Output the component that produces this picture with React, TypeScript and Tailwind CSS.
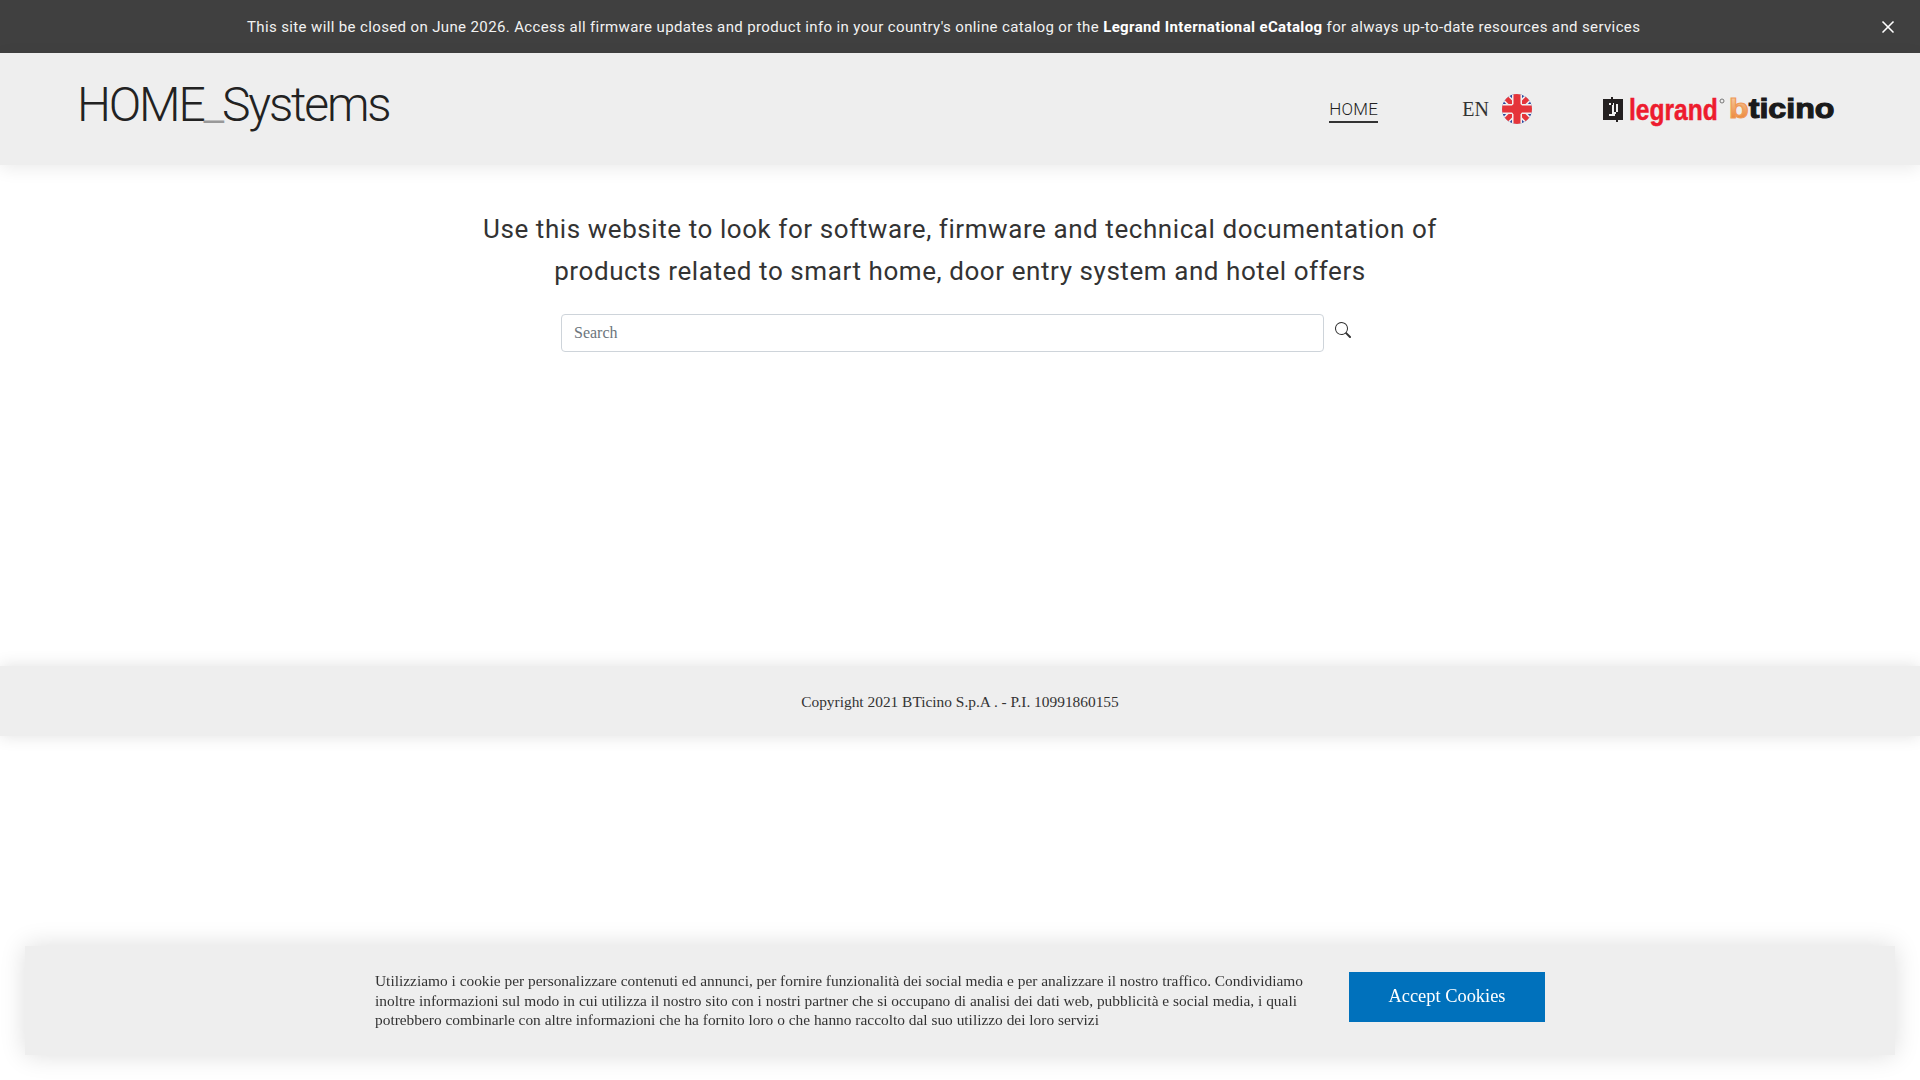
import { X } from "lucide-react";
import { BsSearch } from "react-icons/bs";

const din = "font-['Roboto',sans-serif]";
const serif = "font-['Liberation_Serif',serif]";

function UkFlag() {
  return (
    <svg width="30" height="30" viewBox="0 0 30 30" className="block">
      <defs>
        <clipPath id="flag-circle">
          <circle cx="15" cy="15" r="15" />
        </clipPath>
      </defs>
      <g clipPath="url(#flag-circle)">
        <rect width="30" height="30" fill="#2b4a9f" />
        <path d="M1 1L29 29M29 1L1 29" stroke="#f3eeee" strokeWidth="8" />
        <path d="M1 1L29 29M29 1L1 29" stroke="#e5343a" strokeWidth="5" />
        <path d="M15 0V30M0 15H30" stroke="#f3eeee" strokeWidth="10" />
        <path d="M15 0V30M0 15H30" stroke="#e5343a" strokeWidth="7" />
        <circle cx="15" cy="15" r="6" fill="#e5343a" />
      </g>
    </svg>
  );
}

function BrandLogos() {
  return (
    <svg width="234" height="36" viewBox="0 0 234 36" className="block">
      <defs>
        <linearGradient id="bt-orange" x1="0" y1="0" x2="0" y2="1">
          <stop offset="0" stopColor="#f8d4b0" />
          <stop offset="1" stopColor="#ea7a24" />
        </linearGradient>
      </defs>
      <rect x="1" y="6" width="20" height="21" fill="#231f1f" />
      <path d="M7 11H11V20H15V11" fill="none" stroke="#eeeeee" strokeWidth="2" />
      <path d="M7 22H13" stroke="#eeeeee" strokeWidth="2" />
      <path d="M9 4H11V12H9ZM14 19H16V29H14Z" fill="#231f1f" />
      <text
        transform="translate(27 27) scale(0.82 1)"
        fill="#ed1c2e"
        stroke="#ed1c2e"
        strokeWidth="0.5"
        fontFamily="Liberation Sans"
        fontWeight="700"
        fontSize="30"
      >
        legrand
      </text>
      <circle cx="120" cy="8" r="2" fill="none" stroke="#777" strokeWidth="1" />
      <text
        transform="translate(127 25) scale(1.15 1)"
        fill="#1a1a1a"
        stroke="#1a1a1a"
        strokeWidth="1.1"
        fontFamily="Liberation Sans"
        fontWeight="700"
        fontSize="28"
      >
        <tspan fill="url(#bt-orange)" stroke="#ee9a58">
          b
        </tspan>
        ticino
      </text>
    </svg>
  );
}

export default function App() {
  return (
    <div className="relative h-screen w-full overflow-hidden bg-white">
      {/* Notice */}
      <div
        className={`flex h-[53px] items-center bg-[#404040] pl-[247px] pt-[1px] text-[15px] tracking-[0.37px] text-[#f2f2f2] ${din}`}
      >
        <span className="whitespace-nowrap">
          This site will be closed on June 2026. Access all firmware updates and product info in your country's
          online catalog or the <b className="font-bold text-white">Legrand International eCatalog</b> for always
          up-to-date resources and services
        </span>
        <X size={20} strokeWidth={2} className="ml-auto mr-[22px] text-white" />
      </div>

      {/* Header */}
      <header className="relative z-10 flex h-[112px] items-center bg-[#eeeeee] pl-[77px] shadow-[0_4px_16px_rgba(0,0,0,0.08)]">
        <div className={`-mt-[8px] text-[48px] font-light leading-none tracking-[-2.2px] text-[#222] ${din}`}>
          HOME<span className="text-[#999]">_</span>Systems
        </div>
        <nav className="ml-auto flex items-center pr-[84px]">
          <a className={`border-b-2 border-[#333] pt-[1px] text-[17px] font-light leading-[24px] tracking-[0.3px] text-[#222] ${din}`}>
            HOME
          </a>
          <span className={`ml-[84px] text-[20px] text-[#333] ${serif}`}>EN</span>
          <span className="ml-[13px]">
            <UkFlag />
          </span>
          <span className="ml-[70px] mt-[3px]">
            <BrandLogos />
          </span>
        </nav>
      </header>

      {/* Intro + search */}
      <main className="flex h-[501px] flex-col items-center pt-[43px]">
        <h1 className={`text-center text-[26px] font-normal leading-[42px] tracking-[0.57px] text-[#333] ${din}`}>
          Use this website to look for software, firmware and technical documentation of
          <br />
          products related to smart home, door entry system and hotel offers
        </h1>
        <div className="mt-[22px] flex w-full items-start pl-[561px]">
          <input
            placeholder="Search"
            className={`h-[38px] w-[763px] rounded border border-[#ced4da] bg-white px-3 text-[16px] outline-none placeholder:text-[#6c757d] ${serif}`}
          />
          <BsSearch size={16} className="ml-[11px] mt-[8px] text-[#333]" />
        </div>
      </main>

      {/* Footer */}
      <footer
        className={`flex h-[70px] items-center justify-center bg-[#eeeeee] pt-[2px] text-[15.4px] text-[#333] shadow-[0_0_16px_rgba(0,0,0,0.12)] ${serif}`}
      >
        Copyright 2021 BTicino S.p.A . - P.I. 10991860155
      </footer>

      {/* Cookie banner */}
      <div className="fixed bottom-[25px] left-[25px] right-[25px] flex h-[109px] items-center justify-center gap-[42px] bg-[#eeeeee] shadow-[0_0_24px_rgba(0,0,0,0.14)]">
        <p className={`w-[932px] text-[15.4px] leading-[19.5px] text-[#333] ${serif}`}>
          Utilizziamo i cookie per personalizzare contenuti ed annunci, per fornire funzionalità dei social media e
          per analizzare il nostro traffico. Condividiamo inoltre informazioni sul modo in cui utilizza il nostro
          sito con i nostri partner che si occupano di analisi dei dati web, pubblicità e social media, i quali
          potrebbero combinarle con altre informazioni che ha fornito loro o che hanno raccolto dal suo utilizzo dei
          loro servizi
        </p>
        <button className={`-mt-[7px] h-[50px] w-[196px] bg-[#0071bc] text-[18.4px] text-white ${serif}`}>
          Accept Cookies
        </button>
      </div>
    </div>
  );
}
